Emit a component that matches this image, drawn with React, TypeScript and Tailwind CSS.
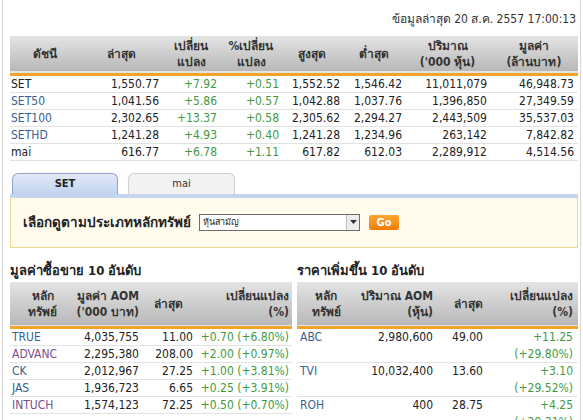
import React from "react";

type IndexRow = {
    name: string;
    link: boolean;
    last: string;
    chg: string;
    pct: string;
    high: string;
    low: string;
    vol: string;
    value: string;
};

const indexRows: IndexRow[] = [
    { name: "SET", link: false, last: "1,550.77", chg: "+7.92", pct: "+0.51", high: "1,552.52", low: "1,546.42", vol: "11,011,079", value: "46,948.73" },
    { name: "SET50", link: true, last: "1,041.56", chg: "+5.86", pct: "+0.57", high: "1,042.88", low: "1,037.76", vol: "1,396,850", value: "27,349.59" },
    { name: "SET100", link: true, last: "2,302.65", chg: "+13.37", pct: "+0.58", high: "2,305.62", low: "2,294.27", vol: "2,443,509", value: "35,537.03" },
    { name: "SETHD", link: true, last: "1,241.28", chg: "+4.93", pct: "+0.40", high: "1,241.28", low: "1,234.96", vol: "263,142", value: "7,842.82" },
    { name: "mai", link: false, last: "616.77", chg: "+6.78", pct: "+1.11", high: "617.82", low: "612.03", vol: "2,289,912", value: "4,514.56" },
];

const topValue = [
    { sym: "TRUE", visited: false, aom: "4,035,755", last: "11.00", chg: "+0.70 (+6.80%)" },
    { sym: "ADVANC", visited: true, aom: "2,295,380", last: "208.00", chg: "+2.00 (+0.97%)" },
    { sym: "CK", visited: false, aom: "2,012,967", last: "27.25", chg: "+1.00 (+3.81%)" },
    { sym: "JAS", visited: false, aom: "1,936,723", last: "6.65", chg: "+0.25 (+3.91%)" },
    { sym: "INTUCH", visited: true, aom: "1,574,123", last: "72.25", chg: "+0.50 (+0.70%)" },
];

const topGain = [
    { sym: "ABC", vol: "2,980,600", last: "49.00", chg: "+11.25", pct: "(+29.80%)" },
    { sym: "TVI", vol: "10,032,400", last: "13.60", chg: "+3.10", pct: "(+29.52%)" },
    { sym: "ROH", vol: "400", last: "28.75", chg: "+4.25", pct: "(+29.31%)" },
];

const th = "font-bold text-[#333] leading-[16px] align-middle";
const headBg = "bg-gradient-to-b from-[#e4e4e4] to-[#b8b8b8] border-b-[3px] border-[#f2a32a]";

export default function App() {
    return (
        <div className="w-[583px] h-[420px] overflow-hidden bg-white font-['DejaVu_Sans','Liberation_Sans',sans-serif] [font-stretch:condensed] text-[12px] text-[#222]">
            <div className="ml-[2px] mr-[2px] h-full border-x border-[#d6d6d6] pl-[7px] pr-[2px]">
                {/* Last update */}
                <div className="pt-[11px] pb-[9px] text-right leading-[16px] text-[#333] pr-[2px]">
                    ข้อมูลล่าสุด 20 ส.ค. 2557 17:00:13
                </div>

                {/* Index table */}
                <table className="w-full table-fixed border-collapse">
                    <colgroup>
                        <col className="w-[70px]" />
                        <col className="w-[82px]" />
                        <col className="w-[58px]" />
                        <col className="w-[62px]" />
                        <col className="w-[60px]" />
                        <col className="w-[63px]" />
                        <col className="w-[85px]" />
                        <col className="w-[88px]" />
                    </colgroup>
                    <thead>
                        <tr className={headBg}>
                            <th className={`${th} h-[38px] text-center`}>ดัชนี</th>
                            <th className={`${th} text-center`}>ล่าสุด</th>
                            <th className={`${th} text-center`}>เปลี่ยน<br />แปลง</th>
                            <th className={`${th} text-center`}>%เปลี่ยน<br />แปลง</th>
                            <th className={`${th} text-center`}>สูงสุด</th>
                            <th className={`${th} text-center`}>ต่ำสุด</th>
                            <th className={`${th} text-center`}>ปริมาณ<br />('000 หุ้น)</th>
                            <th className={`${th} text-center`}>มูลค่า<br />(ล้านบาท)</th>
                        </tr>
                    </thead>
                    <tbody>
                        {indexRows.map((r) => (
                            <tr key={r.name} className="border-b border-[#e2e2e2] h-[17px] leading-[16px]">
                                <td className={`pl-[1px] ${r.link ? "text-[#3a5f8f]" : "text-[#222]"}`}>{r.name}</td>
                                <td className="text-right pr-[3px]">{r.last}</td>
                                <td className="text-right pr-[3px] text-[#3f9a3f]">{r.chg}</td>
                                <td className="text-right pr-[3px] text-[#3f9a3f]">{r.pct}</td>
                                <td className="text-right pr-[2px]">{r.high}</td>
                                <td className="text-right pr-[3px]">{r.low}</td>
                                <td className="text-right pr-[3px]">{r.vol}</td>
                                <td className="text-right pr-[4px]">{r.value}</td>
                            </tr>
                        ))}
                    </tbody>
                </table>

                {/* Tabs */}
                <div className="mt-[12px] flex items-end gap-[10px] pl-[2px]">
                    <div className="w-[106px] h-[21px] rounded-t-[6px] border border-b-0 border-[#8ea3c7] bg-gradient-to-b from-[#e2eaf8] to-[#c2d3ef] text-center text-[11px] font-bold leading-[20px] text-[#222]">
                        SET
                    </div>
                    <div className="w-[107px] h-[21px] rounded-t-[6px] border border-b-0 border-[#d0d0d0] bg-[#f2f2f2] text-center text-[11px] leading-[20px] text-[#333]">
                        mai
                    </div>
                </div>
                <div className="h-[4px] bg-[#c6d5ee]" />
                <div className="h-[50px] border border-t-0 border-[#efd794] bg-[#fffcee] flex items-center pl-[12px]">
                    <span className="font-bold text-[13.5px] text-[#222]">เลือกดูตามประเภทหลักทรัพย์</span>
                    <div className="ml-[8px] w-[161px] h-[17px] border border-[#6d6d6d] bg-white flex items-center">
                        <span className="flex-1 pl-[3px] text-[9px] leading-[15px] text-[#222]">หุ้นสามัญ</span>
                        <span className="w-[13px] h-[15px] border-l border-[#bdbdbd] bg-[#ececec] flex items-center justify-center">
                            <svg width="7" height="4" viewBox="0 0 7 4"><path d="M0 0h7L3.5 4z" fill="#333" /></svg>
                        </span>
                    </div>
                    <div className="ml-[9px] w-[30px] h-[15px] rounded-[2px] bg-gradient-to-b from-[#ffa733] to-[#f07c00] text-white text-[11px] font-bold leading-[15px] text-center">
                        Go
                    </div>
                </div>

                {/* Top 10 tables */}
                <div className="mt-[14px] flex gap-[5px]">
                    <div className="w-[282px]">
                        <div className="font-bold text-[13px] leading-[18px] text-[#222] mb-[2px]">มูลค่าซื้อขาย 10 อันดับ</div>
                        <table className="w-full table-fixed border-collapse">
                            <colgroup>
                                <col className="w-[65px]" />
                                <col className="w-[67px]" />
                                <col className="w-[53px]" />
                                <col className="w-[97px]" />
                            </colgroup>
                            <thead>
                                <tr className={headBg}>
                                    <th className={`${th} h-[46px] text-center`}>หลัก<br />ทรัพย์</th>
                                    <th className={`${th} text-right pr-[3px]`}>มูลค่า AOM<br />('000 บาท)</th>
                                    <th className={`${th} text-center`}>ล่าสุด</th>
                                    <th className={`${th} text-right pr-[3px]`}>เปลี่ยนแปลง<br />(%)</th>
                                </tr>
                            </thead>
                            <tbody>
                                {topValue.map((r) => (
                                    <tr key={r.sym} className="border-b border-[#e2e2e2] h-[17px] leading-[16px]">
                                        <td className={`pl-[2px] ${r.visited ? "text-[#7b4f8c]" : "text-[#3a5f8f]"}`}>{r.sym}</td>
                                        <td className="text-right pr-[3px]">{r.aom}</td>
                                        <td className="text-right pr-[2px]">{r.last}</td>
                                        <td className="text-right pr-[3px] text-[#3f9a3f] whitespace-nowrap">{r.chg}</td>
                                    </tr>
                                ))}
                            </tbody>
                        </table>
                    </div>
                    <div className="w-[281px]">
                        <div className="font-bold text-[13px] leading-[18px] text-[#222] mb-[2px]">ราคาเพิ่มขึ้น 10 อันดับ</div>
                        <table className="w-full table-fixed border-collapse">
                            <colgroup>
                                <col className="w-[58px]" />
                                <col className="w-[81px]" />
                                <col className="w-[64px]" />
                                <col className="w-[78px]" />
                            </colgroup>
                            <thead>
                                <tr className={headBg}>
                                    <th className={`${th} h-[46px] text-center`}>หลัก<br />ทรัพย์</th>
                                    <th className={`${th} text-right pr-[3px]`}>ปริมาณ AOM<br />(หุ้น)</th>
                                    <th className={`${th} text-center`}>ล่าสุด</th>
                                    <th className={`${th} text-right pr-[5px]`}>เปลี่ยนแปลง<br />(%)</th>
                                </tr>
                            </thead>
                            <tbody>
                                {topGain.map((r) => (
                                    <tr key={r.sym} className="border-b border-[#e2e2e2] leading-[16.5px] align-top">
                                        <td className="pl-[3px] text-[#3a5f8f]">{r.sym}</td>
                                        <td className="text-right pr-[3px]">{r.vol}</td>
                                        <td className="text-right pr-[17px]">{r.last}</td>
                                        <td className="text-right pr-[5px] text-[#3f9a3f]">
                                            {r.chg}
                                            <br />
                                            {r.pct}
                                        </td>
                                    </tr>
                                ))}
                            </tbody>
                        </table>
                    </div>
                </div>
            </div>
        </div>
    );
}
